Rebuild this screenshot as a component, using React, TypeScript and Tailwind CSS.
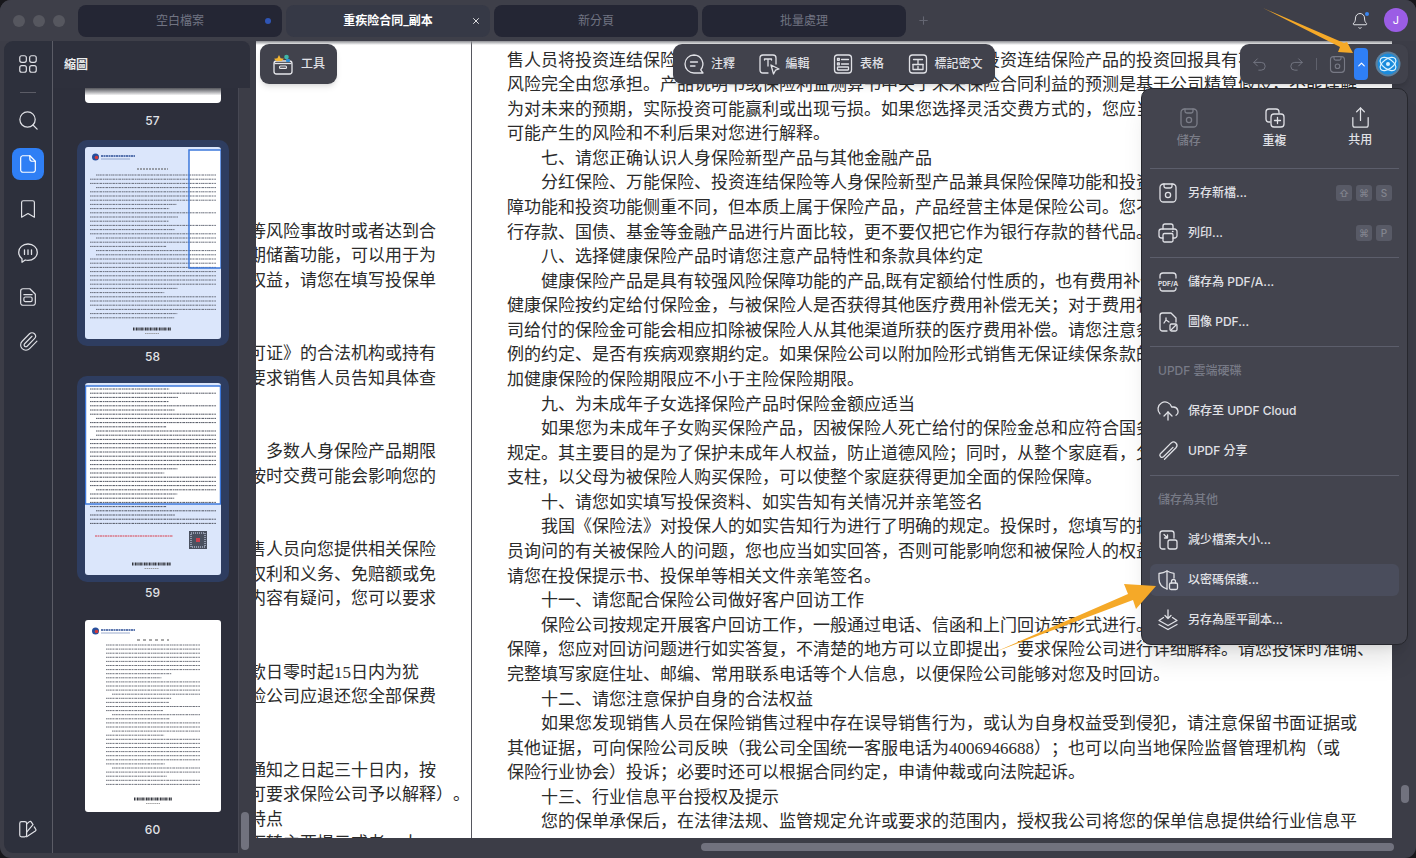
import { Bell, Bookmark, ChevronUp, CloudUpload, Paperclip, Plus, Redo2, Search, Share, Undo2, X } from "lucide-react";
import type { ReactNode } from "react";

const pageLines: [string, boolean?][] = [
  ["售人员将投资连结保险产品与其他保险产品进行比较，您应知晓投资连结保险产品的投资回报具有不确定性，"],
  ["风险完全由您承担。产品说明书或保险利益测算书中关于未来保险合同利益的预测是基于公司精算假设，不能理解"],
  ["为对未来的预期，实际投资可能赢利或出现亏损。如果您选择灵活交费方式的，您应当要求销售人员将迟交或不交"],
  ["可能产生的风险和不利后果对您进行解释。"],
  ["七、请您正确认识人身保险新型产品与其他金融产品", true],
  ["分红保险、万能保险、投资连结保险等人身保险新型产品兼具保险保障功能和投资功能", true],
  ["障功能和投资功能侧重不同，但本质上属于保险产品，产品经营主体是保险公司。您不应当将其与银行"],
  ["行存款、国债、基金等金融产品进行片面比较，更不要仅把它作为银行存款的替代品。"],
  ["八、选择健康保险产品时请您注意产品特性和条款具体约定", true],
  ["健康保险产品是具有较强风险保障功能的产品,既有定额给付性质的，也有费用补偿性质的", true],
  ["健康保险按约定给付保险金，与被保险人是否获得其他医疗费用补偿无关；对于费用补偿型产品，保险公"],
  ["司给付的保险金可能会相应扣除被保险人从其他渠道所获的医疗费用补偿。请您注意条款中关于"],
  ["例的约定、是否有疾病观察期约定。如果保险公司以附加险形式销售无保证续保条款的产品"],
  ["加健康保险的保险期限应不小于主险保险期限。"],
  ["九、为未成年子女选择保险产品时保险金额应适当", true],
  ["如果您为未成年子女购买保险产品，因被保险人死亡给付的保险金总和应符合国务院保险监督", true],
  ["规定。其主要目的是为了保护未成年人权益，防止道德风险；同时，从整个家庭看，父母是家庭的经济"],
  ["支柱，以父母为被保险人购买保险，可以使整个家庭获得更加全面的保险保障。"],
  ["十、请您如实填写投保资料、如实告知有关情况并亲笔签名", true],
  ["我国《保险法》对投保人的如实告知行为进行了明确的规定。投保时，您填写的投保单应当", true],
  ["员询问的有关被保险人的问题，您也应当如实回答，否则可能影响您和被保险人的权益。"],
  ["请您在投保提示书、投保单等相关文件亲笔签名。"],
  ["十一、请您配合保险公司做好客户回访工作", true],
  ["保险公司按规定开展客户回访工作，一般通过电话、信函和上门回访等形式进行。为了更好地", true],
  ["保障，您应对回访问题进行如实答复，不清楚的地方可以立即提出，要求保险公司进行详细解释。请您投保时准确、"],
  ["完整填写家庭住址、邮编、常用联系电话等个人信息，以便保险公司能够对您及时回访。"],
  ["十二、请您注意保护自身的合法权益", true],
  ["如果您发现销售人员在保险销售过程中存在误导销售行为，或认为自身权益受到侵犯，请注意保留书面证据或", true],
  ["其他证据，可向保险公司反映（我公司全国统一客服电话为4006946688）；也可以向当地保险监督管理机构（或"],
  ["保险行业协会）投诉；必要时还可以根据合同约定，申请仲裁或向法院起诉。"],
  ["十三、行业信息平台授权及提示", true],
  ["您的保单承保后，在法律法规、监管规定允许或要求的范围内，授权我公司将您的保单信息提供给行业信息平", true],
];

const leftLines: Record<number, string> = {
  7: "等风险事故时或者达到合",
  8: "期储蓄功能，可以用于为",
  9: "权益，请您在填写投保单",
  12: "可证》的合法机构或持有",
  13: "要求销售人员告知具体查",
  16: "　多数人身保险产品期限",
  17: "按时交费可能会影响您的",
  20: "售人员向您提供相关保险",
  21: "权利和义务、免赔额或免",
  22: "内容有疑问，您可以要求",
  25: "款日零时起15日内为犹",
  26: "险公司应退还您全部保费",
  29: "通知之日起三十日内，按",
  30: "可要求保险公司予以解释）。",
  31: "特点",
  32: "下转主要提示或者一大",
};

const Ico = ({ children, size = 24, className = "" }: { children: ReactNode; size?: number; className?: string }) => (
  <svg width={size} height={size} viewBox="0 0 24 24" fill="none" stroke="currentColor" strokeWidth={1.3} strokeLinecap="round" strokeLinejoin="round" className={className}>
    {children}
  </svg>
);

const SaveIcon = ({ size = 24 }: { size?: number }) => (
  <Ico size={size}>
    <rect x="4" y="3" width="16" height="18" rx="3.5" />
    <path d="M8 3v2.2A1.8 1.8 0 0 0 9.8 7h4.4A1.8 1.8 0 0 0 16 5.2V3" />
    <circle cx="12" cy="14" r="2.6" />
  </Ico>
);

const GridIcon = () => (
  <Ico size={22}>
    <rect x="3" y="3" width="7.2" height="7.2" rx="2.2" />
    <rect x="13.8" y="3" width="7.2" height="7.2" rx="2.2" />
    <rect x="3" y="13.8" width="7.2" height="7.2" rx="2.2" />
    <rect x="13.8" y="13.8" width="7.2" height="7.2" rx="2.2" />
  </Ico>
);

const FileIcon = () => (
  <Ico size={22}>
    <path d="M6 3h8v3.2A2.800 2.800 0 0 0 16.800 9H20v9.500a2.500 2.500 0 0 1-2.500 2.500h-11A2.500 2.500 0 0 1 4 18.500v-13A2.500 2.500 0 0 1 6 3z" />
    <path d="M14 3l6 6" />
  </Ico>
);

const ChatIcon = () => (
  <Ico size={24}>
    <path d="M12 3c5.200 0 9.300 3.600 9.300 8.200s-4.100 8.200-9.300 8.200c-1 0-1.900-.1-2.800-.4L6 21.200v-3.500c-2-1.500-3.300-3.900-3.300-6.500C2.700 6.600 6.800 3 12 3z" />
    <path d="M8.500 8.800v4.600M12 8.800v4.600M15.500 8.800v4.600" />
  </Ico>
);

const FormIcon = () => (
  <Ico size={22}>
    <path d="M7 3h7l6 6v9.500a2.500 2.500 0 0 1-2.500 2.500h-11A2.500 2.500 0 0 1 4 18.500v-13A2.500 2.500 0 0 1 6.500 3z" />
    <rect x="7.500" y="12" width="9" height="5" rx="1.500" />
    <path d="M7.500 9.500h9" />
  </Ico>
);

const PaletteIcon = () => (
  <Ico size={22}>
    <rect x="3" y="4" width="7.500" height="16.500" rx="2" />
    <path d="M10.500 6.500l3-2.500c.7-.5 1.600-.4 2 .3l2 3-7 8" />
    <path d="M10.500 20.500l9.500-6.300c.7-.5.900-1.400.4-2.100l-1.600-2.400" />
  </Ico>
);

const CommentIcon = () => (
  <Ico>
    <path d="M12 3a9 9 0 1 0 0 18h9l-2.300-3.200A9 9 0 0 0 12 3z" />
    <path d="M8.500 10h7M8.500 14h4.500" />
  </Ico>
);

const EditIcon = () => (
  <Ico>
    <path d="M11 21H6a3 3 0 0 1-3-3V6a3 3 0 0 1 3-3h10a3 3 0 0 1 3 3v6" />
    <path d="M7.500 8V7h7v1M11 7v7" />
    <path d="M14 13l8 4-3.500 1.200L16.500 22z" />
  </Ico>
);

const TableIcon = () => (
  <Ico>
    <rect x="3.500" y="3" width="17" height="18" rx="3" />
    <path d="M10.500 7.500h7M10.500 12h7" />
    <rect x="6.500" y="6.500" width="1.800" height="1.800" />
    <rect x="6.500" y="11" width="1.800" height="1.800" />
    <rect x="6.500" y="15" width="11" height="3" rx=".5" />
  </Ico>
);

const RedactIcon = () => (
  <Ico>
    <rect x="3.500" y="3" width="17" height="18" rx="3" />
    <path d="M7.500 7.500h9M12 7.500v4.500M7 12.500h10" />
    <path d="M7 12.500v5h10v-5M12 14.500v3" />
  </Ico>
);

const ToolsIcon = () => (
  <svg width="24" height="24" viewBox="0 0 24 24" fill="none">
    <rect x="3" y="9" width="18" height="13" rx="2.500" stroke="#e5e6ea" strokeWidth="1.300" />
    <path d="M3.500 11.500h17" stroke="#e5e6ea" strokeWidth="1.300" />
    <path d="M8 3l1.600 3.200 3.400.5-2.400 2.300H5.200L3 6.700l3.400-.5z" fill="#f2b632" />
    <circle cx="15.500" cy="5" r="2.300" fill="#3fb6a8" />
    <rect x="15" y="7" width="4" height="3" rx="1" fill="#2f8fd6" />
    <rect x="8.500" y="14" width="7" height="2.400" rx="1" stroke="#e5e6ea" strokeWidth="1.100" />
  </svg>
);

const DuplicateIcon = () => (
  <Ico>
    <path d="M7 16H6a3 3 0 0 1-3-3V6a3 3 0 0 1 3-3h7a3 3 0 0 1 3 3v1" />
    <rect x="8" y="8" width="13" height="13" rx="3" />
    <path d="M14.500 11.500v6M11.500 14.500h6" />
  </Ico>
);

const PrinterIcon = () => (
  <Ico>
    <path d="M7 8V5a2 2 0 0 1 2-2h6a2 2 0 0 1 2 2v3" />
    <path d="M7 17H5.500A2.500 2.500 0 0 1 3 14.500v-4A2.500 2.500 0 0 1 5.500 8h13a2.500 2.500 0 0 1 2.500 2.500v4a2.500 2.500 0 0 1-2.500 2.500H17" />
    <rect x="7" y="12.500" width="10" height="8.500" rx="1.500" />
    <path d="M16.500 10.500h.5" />
  </Ico>
);

const PdfAIcon = () => (
  <Ico>
    <path d="M4 8V6a3 3 0 0 1 3-3h10a3 3 0 0 1 3 3v2M4 18v.5A2.500 2.500 0 0 0 6.500 21h11a2.500 2.500 0 0 0 2.500-2.500V18" />
    <text x="12" y="15.800" textAnchor="middle" fontSize="6.600" fontWeight="700" fill="currentColor" stroke="none" fontFamily="Inter, sans-serif">
      PDF/A
    </text>
  </Ico>
);

const ImagePdfIcon = () => (
  <Ico>
    <path d="M11 21H6.500A2.500 2.500 0 0 1 4 18.500v-13A2.500 2.500 0 0 1 6.500 3H15l5 5v4" />
    <path d="M8 13l2-3 3 2M10 10V8" />
    <rect x="14" y="14" width="7" height="7" rx="1.500" />
    <path d="M15 20l5-5" />
  </Ico>
);

const LinkIcon = () => (
  <Ico>
    <path d="M8.500 20.200 20 8.700a3.400 3.400 0 0 0-4.800-4.800L4.400 14.700a2.200 2.200 0 0 0 3.100 3.100L17 8.400" />
  </Ico>
);

const ReduceIcon = () => (
  <Ico>
    <path d="M9 21H6.500A2.500 2.500 0 0 1 4 18.500v-13A2.500 2.500 0 0 1 6.500 3h9A2.500 2.500 0 0 1 18 5.500V10" />
    <path d="M8 6.500l3.500 3.500M11.500 7v3H8.500" />
    <rect x="12" y="12" width="9" height="9" rx="2" />
  </Ico>
);

const ShieldLockIcon = () => (
  <Ico>
    <path d="M11 21C6.500 19.500 3 16 3 11V5.500C6 5.200 8.500 4.500 11 3c2 1.200 4 2 7 2.400V10" />
    <path d="M11 3v18" />
    <rect x="13.500" y="15" width="8" height="6.500" rx="1.500" />
    <path d="M15.500 15v-1.500a2 2 0 0 1 4 0V15" />
  </Ico>
);

const FlattenIcon = () => (
  <Ico>
    <path d="M12 2v8M9 7.500l3 3 3-3" />
    <path d="M7.500 9.500 3 12.500l9 5 9-5-4.500-3" />
    <path d="M3 16.500l9 5 9-5" />
  </Ico>
);

const BrandIcon = () => (
  <svg width="26" height="26" viewBox="0 0 26 26" fill="none">
    <circle cx="13" cy="13" r="12.500" fill="#5b7f9d" />
    <circle cx="13" cy="13" r="10.500" fill="#1a8bdc" />
    <ellipse cx="13" cy="13" rx="9" ry="5" stroke="#d8f1ff" strokeWidth="1.200" transform="rotate(35 13 13)" />
    <ellipse cx="13" cy="13" rx="9" ry="5" stroke="#d8f1ff" strokeWidth="1.200" transform="rotate(-35 13 13)" />
    <circle cx="13" cy="13" r="2" fill="#d8f1ff" />
  </svg>
);

const hash = (n: number) => {
  const v = Math.sin(n * 12.9898) * 43758.5453;
  return v - Math.floor(v);
};

const MiniText = ({ from, to, x1, x2, step = 4.2, seed = 1, color = "#666b78" }: { from: number; to: number; x1: number; x2: number; step?: number; seed?: number; color?: string }) => {
  const rows: number[] = [];
  for (let y = from; y < to; y += step) rows.push(y);
  return (
    <g stroke={color} strokeWidth={1} strokeDasharray="1.6 .5 1 .4 2.2 .7">
      {rows.map((y, i) => {
        const r = hash(i + seed);
        const short = r > 0.72;
        const indent = r > 0.55 && r <= 0.72;
        return <line key={i} x1={indent ? x1 + 6 : x1} x2={short ? x1 + (x2 - x1) * (0.3 + r * 0.4) : x2} y1={y} y2={y} />;
      })}
    </g>
  );
};

const Barcode = ({ x, y, w }: { x: number; y: number; w: number }) => (
  <g>
    <line x1={x} x2={x + w} y1={y} y2={y} stroke="#33353c" strokeWidth={3} strokeDasharray="1 .5 .6 .7 1.400 .4" />
    <line x1={x + w / 2 - 7} x2={x + w / 2 + 7} y1={y + 4.5} y2={y + 4.5} stroke="#888" strokeWidth={0.8} strokeDasharray="1.500 .6" />
  </g>
);

const Logo = ({ x, y, w }: { x: number; y: number; w: number }) => (
  <g>
    <circle cx={x + 3.5} cy={y} r={3.5} fill="#274f9c" />
    <circle cx={x + 4.5} cy={y + 0.5} r={1.8} fill="#d33a3a" />
    <line x1={x + 9} x2={x + w - 7} y1={y - 1} y2={y - 1} stroke="#2c4f97" strokeWidth={1.5} strokeDasharray="2 .5" />
    <line x1={x + 9} x2={x + w - 12} y1={y + 2} y2={y + 2} stroke="#7188b8" strokeWidth={0.7} />
  </g>
);

const Thumb58 = () => (
  <svg width="136" height="192" viewBox="0 0 136 192" className="block rounded-[3px]">
    <rect width="136" height="192" fill="#dbe6fb" />
    <rect x="104" y="3" width="32" height="118" fill="#fff" />
    <Logo x={7} y={10} w={50} />
    <line x1="52" x2="83" y1="22" y2="22" stroke="#555" strokeWidth="1.200" strokeDasharray="2 1" />
    <MiniText from={28} to={172} x1={5} x2={131} seed={3} />
    <Barcode x={48} y={182} w={38} />
    <rect x="104" y="3" width="32" height="118" fill="none" stroke="#3c78dc" strokeWidth="1.500" />
  </svg>
);

const Thumb59 = () => (
  <svg width="136" height="192" viewBox="0 0 136 192" className="block rounded-[3px]">
    <rect width="136" height="192" fill="#dbe6fb" />
    <rect x="0" y="3" width="136" height="118" fill="#fff" />
    <MiniText from={6} to={143} x1={5} x2={131} seed={11} color="#4e525e" />
    <line x1="10" x2="88" y1="153" y2="153" stroke="#d8404f" strokeWidth="1" strokeDasharray="2 .5" />
    <rect x="104" y="148" width="18" height="18" fill="#4a5160" />
    <rect x="106" y="150" width="14" height="14" fill="none" stroke="#dbe6fb" strokeWidth="1" strokeDasharray="1 1" />
    <rect x="111" y="155" width="4" height="4" fill="#c8404f" />
    <Barcode x={47} y={181} w={39} />
    <rect x="0.500" y="3" width="135" height="118" fill="none" stroke="#3c78dc" strokeWidth="1.500" />
  </svg>
);

const Thumb60 = () => (
  <svg width="136" height="192" viewBox="0 0 136 192" className="block rounded-[3px]">
    <rect width="136" height="192" fill="#fff" />
    <Logo x={7} y={11} w={50} />
    <line x1="52" x2="84" y1="20" y2="20" stroke="#555" strokeWidth="1.200" strokeDasharray="3 3" />
    <MiniText from={25} to={166} x1={21} x2={115} step={4.1} seed={23} color="#6d707a" />
    <Barcode x={49} y={179} w={38} />
  </svg>
);

const RailItem = ({ children, active }: { children: ReactNode; active?: boolean }) => (
  <div className="flex h-[44.3px] items-center justify-center">
    <div className={`flex h-[32px] w-[32px] items-center justify-center rounded-[8px] ${active ? "bg-[#2f7ff5] text-white" : "text-[#dfe0e5]"}`}>{children}</div>
  </div>
);

const Tab = ({ label, active, dot }: { label: string; active?: boolean; dot?: boolean }) => (
  <div className={`relative flex h-[32px] w-[204px] items-center justify-center rounded-[8px] text-[12px] ${active ? "bg-[#363946] font-semibold text-white" : "bg-[#242634] text-[#717482]"}`}>
    {label}
    {dot && <span className="absolute right-[11px] h-[6px] w-[6px] rounded-full bg-[#2f55b5]" />}
    {active && <X size={10} strokeWidth={2} className="absolute right-[9px] text-white" />}
  </div>
);

const Sep = () => <div className="mx-[8px] my-[4px] h-px shrink-0 bg-[#5c5e6b]" />;

const MenuItem = ({ icon, label, hover, keys }: { icon: ReactNode; label: string; hover?: boolean; keys?: string[] }) => (
  <div className={`mx-[8px] my-[4px] flex h-[32px] shrink-0 items-center gap-[8px] rounded-[6px] px-[6px] text-[12px] font-medium text-[#e0e1e6] ${hover ? "bg-[#4a4d5c]" : ""}`}>
    {icon}
    <span>{label}</span>
    {keys && (
      <div className="ml-auto mr-[1px] flex gap-[4px]">
        {keys.map((k) => (
          <span key={k} className="flex h-[16px] w-[16px] items-center justify-center rounded-[3px] bg-[#585a66] text-[10px] text-[#83858f]">
            {k}
          </span>
        ))}
      </div>
    )}
  </div>
);

const MenuHead = ({ label }: { label: string }) => <div className="flex h-[40px] shrink-0 items-center pl-[16px] text-[12px] font-medium text-[#777a86]">{label}</div>;

const TopAction = ({ icon, label, dim }: { icon: ReactNode; label: string; dim?: boolean }) => (
  <div className={`flex w-[86px] flex-col items-center gap-[3px] text-[12px] font-medium ${dim ? "text-[#7b7d88]" : "text-[#e0e1e6]"}`}>
    {icon}
    <span className="leading-[16px]">{label}</span>
  </div>
);

const BarItem = ({ icon, label }: { icon: ReactNode; label: string }) => (
  <div className="flex items-center gap-[5px]">
    {icon}
    <span>{label}</span>
  </div>
);

export default function App() {
  return (
    <div className="relative h-[858px] w-[1416px] overflow-hidden bg-[#17171b] font-['Inter','Noto_Sans_CJK_TC',sans-serif]">
      <div className="flex h-full flex-col overflow-hidden rounded-[11px] bg-[#3c3d47]">
        {/* Title bar */}
        <div className="flex h-[41px] shrink-0 items-center bg-[#3e3f49]">
          <div className="ml-[13px] flex w-[65px] gap-[8px]">
            <span className="h-[12px] w-[12px] rounded-full bg-[#56575f]" />
            <span className="h-[12px] w-[12px] rounded-full bg-[#56575f]" />
            <span className="h-[12px] w-[12px] rounded-full bg-[#56575f]" />
          </div>
          <div className="flex gap-[4px]">
            <Tab label="空白檔案" dot />
            <Tab label="重疾险合同_副本" active />
            <Tab label="新分頁" />
            <Tab label="批量處理" />
          </div>
          <Plus size={13} className="ml-[11px] text-[#646672]" />
          <div className="relative ml-auto mr-[47px] text-[#e3e4e8]">
            <Bell size={18} strokeWidth={1.3} />
            <span className="absolute right-0 top-0 h-[4px] w-[4px] rounded-full bg-[#3a86f0]" />
          </div>
        </div>

        <div className="flex min-h-0 flex-1">
          {/* Left panel */}
          <div className="mb-[5px] ml-[4px] flex w-[252px] shrink-0">
            <div className="flex w-[49px] shrink-0 flex-col items-center rounded-l-[9px] border-r border-[#5b5c66] bg-[#2d303c]">
              <div className="flex h-[46px] items-center text-[#dfe0e5]">
                <GridIcon />
              </div>
              <div className="mb-[5px] mt-[5px] h-px w-[16px] bg-[#5b5c66]" />
              <RailItem>
                <Search size={23} strokeWidth={1.3} />
              </RailItem>
              <RailItem active>
                <FileIcon />
              </RailItem>
              <RailItem>
                <Bookmark size={22} strokeWidth={1.3} />
              </RailItem>
              <RailItem>
                <ChatIcon />
              </RailItem>
              <RailItem>
                <FormIcon />
              </RailItem>
              <RailItem>
                <Paperclip size={21} strokeWidth={1.3} />
              </RailItem>
              <div className="mb-[13px] mt-auto text-[#dfe0e5]">
                <PaletteIcon />
              </div>
            </div>
            <div className="flex min-w-0 flex-1 flex-col">
              <div className="flex h-[47px] w-[197px] shrink-0 items-center rounded-tr-[8px] bg-[#2e303c] pl-[11px] text-[12px] font-bold text-[#eceded]">縮圖</div>
              <div className="flex min-h-0 flex-1">
                <div className="flex w-[185px] shrink-0 flex-col items-center overflow-hidden bg-[#2d2f3b] pl-[14px] text-[12px] font-medium text-[#e2e3e7]">
                  <div className="h-[15px] w-[136px] shrink-0 rounded-b-[4px] bg-gradient-to-b from-[#55565c] via-white to-white" />
                  <div className="flex h-[37px] shrink-0 items-center pb-[2px]">57</div>
                  <div className="shrink-0 rounded-[10px] bg-[#2e3d60] px-[8px] py-[7px]">
                    <Thumb58 />
                  </div>
                  <div className="flex h-[30px] shrink-0 items-center pb-[8px]">58</div>
                  <div className="shrink-0 rounded-[10px] bg-[#2e3d60] px-[8px] py-[7px]">
                    <Thumb59 />
                  </div>
                  <div className="flex h-[24px] shrink-0 items-center pb-[2px]">59</div>
                  <div className="mt-[14px] shrink-0">
                    <Thumb60 />
                  </div>
                  <div className="flex h-[34px] shrink-0 items-center pt-[1px]">60</div>
                </div>
                <div className="flex flex-1 items-end border-l border-[#474853] bg-[#3c3d47] pl-[2px]">
                  <div className="mb-[3px] h-[38px] w-[8px] rounded-full bg-[#71727e]" />
                </div>
              </div>
            </div>
          </div>

          {/* Document */}
          <div className="flex min-w-0 flex-1 flex-col">
            <div className="flex min-h-0 flex-1">
              <div className="relative flex w-[1136px] shrink-0 overflow-hidden bg-white font-['Liberation_Serif','Noto_Sans_CJK_SC',serif] text-[17px] text-[#2b2b2b] [text-spacing-trim:space-all]">
                <div className="pointer-events-none absolute inset-x-0 top-0 h-[4px] bg-gradient-to-b from-[#8d8e93] to-transparent" />
                <div className="w-[216px] shrink-0 overflow-hidden border-r border-[#56575f] pt-[7px]">
                  <div className="ml-[-7px]">
                    {Array.from({ length: 33 }, (_, i) => (
                      <div key={i} className="h-[24.5px] whitespace-nowrap leading-[24.5px]">
                        {leftLines[i] ?? ""}
                      </div>
                    ))}
                  </div>
                </div>
                <div className="min-w-0 flex-1 overflow-hidden pl-[35px] pt-[7.5px]">
                  {pageLines.map(([text, indent], i) => (
                    <div key={i} className={`h-[24.58px] whitespace-nowrap leading-[24.58px] ${indent ? "pl-[34px]" : ""}`}>
                      {text}
                    </div>
                  ))}
                </div>
              </div>
              <div className="flex flex-1 items-end pb-[35px] pl-[9px]">
                <div className="h-[18px] w-[8px] rounded-full bg-[#71727e]" />
              </div>
            </div>
            <div className="flex h-[20px] shrink-0 pl-[445px] pt-[5px]">
              <div className="h-[8px] w-[693px] rounded-full bg-[#71727e]" />
            </div>
          </div>
        </div>
      </div>

      {/* Floating toolbars */}
      <div className="absolute left-[260px] top-[44px] flex h-[40px] w-[77px] items-center gap-[6px] rounded-[9px] bg-[#41424c] pl-[11px] text-[12px] font-medium text-[#e0e1e6] shadow-md">
        <ToolsIcon />
        <span>工具</span>
      </div>
      <div className="absolute left-[673px] top-[44px] flex h-[40px] w-[322px] items-center gap-[21.5px] rounded-[9px] bg-[#41424c] pl-[9px] text-[12px] font-medium text-[#e0e1e6] shadow-md">
        <BarItem icon={<CommentIcon />} label="注釋" />
        <BarItem icon={<EditIcon />} label="編輯" />
        <BarItem icon={<TableIcon />} label="表格" />
        <BarItem icon={<RedactIcon />} label="標記密文" />
      </div>
      <div className="absolute left-[1240px] top-[44px] flex h-[40px] w-[168px] items-center rounded-[9px] bg-[#41424c] pl-[11px] text-[#777985] shadow-md">
        <Undo2 size={17} strokeWidth={1.3} />
        <Redo2 size={17} strokeWidth={1.3} className="ml-[20px]" />
        <div className="ml-[11px] h-[12px] w-px bg-[#5f616c]" />
        <div className="ml-[10px]">
          <SaveIcon size={21} />
        </div>
        <div className="ml-[6px] flex h-[32px] w-[14px] items-center justify-center rounded-[4px] bg-[#2f7ff5] text-white">
          <ChevronUp size={11} strokeWidth={2.5} />
        </div>
        <div className="ml-[7px]">
          <BrandIcon />
        </div>
      </div>

      {/* Save menu */}
      <div className="absolute left-[1141px] top-[88px] flex h-[557px] w-[267px] flex-col rounded-[10px] border border-[#26272d] bg-[#43444e] shadow-xl">
        <div className="flex h-[75px] shrink-0 px-[4px] pt-[17px]">
          <TopAction dim icon={<SaveIcon />} label="儲存" />
          <TopAction icon={<DuplicateIcon />} label="重複" />
          <TopAction icon={<Share size={23} strokeWidth={1.3} />} label="共用" />
        </div>
        <Sep />
        <MenuItem icon={<SaveIcon />} label="另存新檔..." keys={["⇧", "⌘", "S"]} />
        <MenuItem icon={<PrinterIcon />} label="列印..." keys={["⌘", "P"]} />
        <Sep />
        <MenuItem icon={<PdfAIcon />} label="儲存為 PDF/A..." />
        <MenuItem icon={<ImagePdfIcon />} label="圖像 PDF..." />
        <Sep />
        <MenuHead label="UPDF 雲端硬碟" />
        <MenuItem icon={<CloudUpload size={24} strokeWidth={1.3} />} label="保存至 UPDF Cloud" />
        <MenuItem icon={<LinkIcon />} label="UPDF 分享" />
        <Sep />
        <MenuHead label="儲存為其他" />
        <MenuItem icon={<ReduceIcon />} label="減少檔案大小..." />
        <MenuItem icon={<ShieldLockIcon />} label="以密碼保護..." hover />
        <MenuItem icon={<FlattenIcon />} label="另存為壓平副本..." />
      </div>

      {/* Avatar */}
      <div className="absolute left-[1384px] top-[8px] flex h-[24px] w-[24px] items-center justify-center rounded-full bg-[#9b5de5] text-[11px] text-white">J</div>

      {/* Annotation arrows */}
      <svg width="1416" height="858" className="pointer-events-none absolute left-0 top-0" fill="#f5a928">
        <polygon points="1263,8 1344,43 1347,42 1353,53 1338,52 1340,47" />
        <polygon points="995,652 1128,594 1124,584 1156,586 1136,609 1133,600" />
      </svg>
    </div>
  );
}
